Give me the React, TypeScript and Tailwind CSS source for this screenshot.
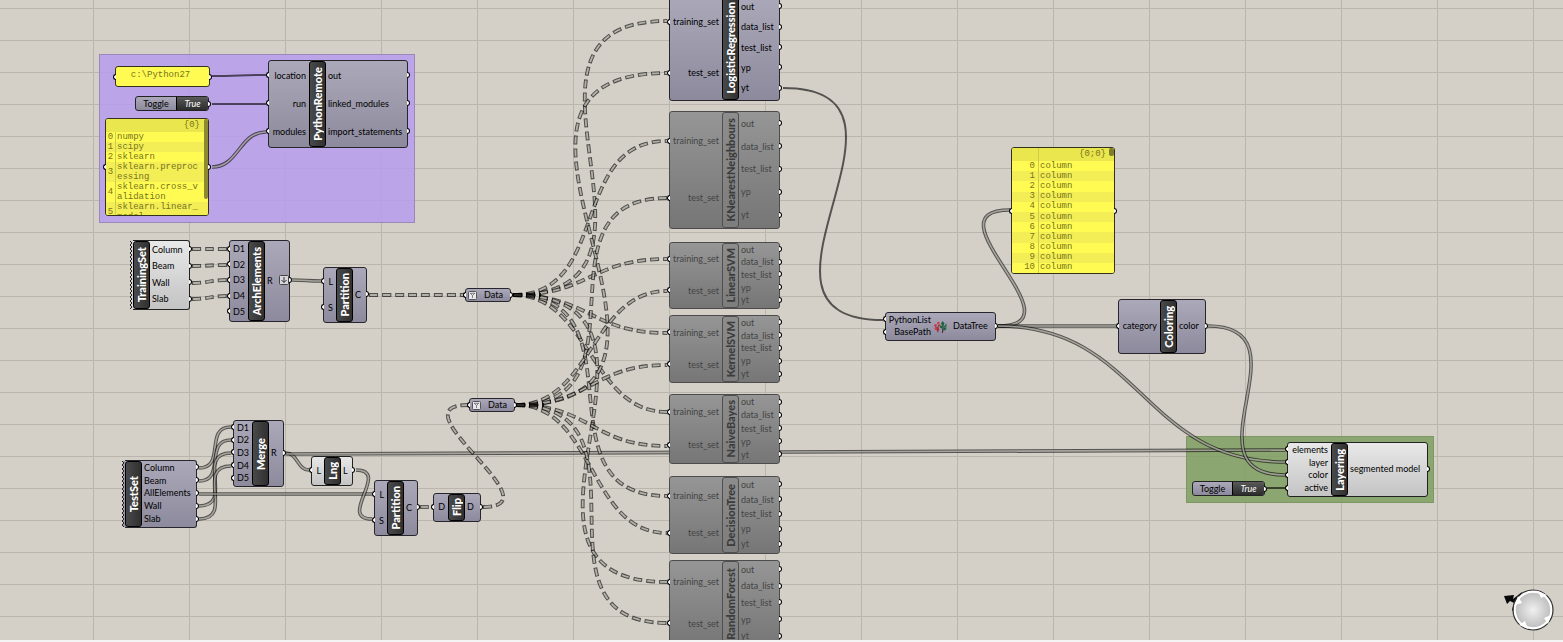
import React from "react";

type WireKind = "item" | "list" | "tree";
type Wire = { from: [number, number]; to: [number, number]; kind: WireKind };

const wire = (kind: WireKind, x1: number, y1: number, x2: number, y2: number): Wire => ({
  kind,
  from: [x1, y1],
  to: [x2, y2],
});

const wires: Wire[] = [
  wire("item", 212, 76, 266, 75),
  wire("item", 212, 104, 266, 104),
  wire("list", 212, 167, 266, 132),
  wire("tree", 192, 249, 227, 249),
  wire("tree", 192, 266, 227, 265),
  wire("tree", 192, 283, 227, 280),
  wire("tree", 192, 299, 227, 296),
  wire("list", 292, 280, 321, 281),
  wire("tree", 369, 295, 464, 295),
  wire("list", 199, 468, 231, 427),
  wire("list", 199, 481, 231, 440),
  wire("list", 199, 506, 231, 453),
  wire("list", 199, 519, 231, 466),
  wire("list", 199, 494, 372, 494),
  wire("list", 286, 453, 309, 470),
  wire("list", 286, 454, 1285, 450),
  wire("list", 356, 470, 372, 519),
  wire("tree", 420, 507, 431, 507),
  wire("tree", 483, 507, 468, 405),
  ...[21, 141, 259, 333, 412, 496, 582].map((y) => wire("tree", 513, 295, 667, y)),
  ...[73, 198, 291, 365, 446, 533, 623].map((y) => wire("tree", 516, 405, 667, y)),
  wire("item", 783, 88, 883, 320),
  wire("list", 998, 326, 1010, 210),
  wire("list", 998, 326, 1116, 326),
  wire("list", 998, 326, 1285, 462),
  wire("list", 1208, 326, 1285, 475),
  wire("item", 1267, 488, 1285, 488),
];

function wirePath({ from: [x1, y1], to: [x2, y2] }: Wire) {
  const dx = Math.abs(x2 - x1);
  const dy = Math.abs(y2 - y1);
  const reach = dx / 2 + Math.max(0, 0.76 * dy - 0.62 * dx);
  return `M${x1} ${y1}C${x1 + reach} ${y1} ${x2 - reach} ${y2} ${x2} ${y2}`;
}

function Wires() {
  return (
    <svg className="pointer-events-none absolute inset-0 size-full" fill="none" aria-hidden="true">
      {wires.map((w, i) => {
        const d = wirePath(w);
        if (w.kind === "item") return <path key={i} d={d} stroke="#000" strokeOpacity=".6" strokeWidth="2" />;
        if (w.kind === "list")
          return (
            <g key={i}>
              <path d={d} stroke="#000" strokeOpacity=".6" strokeWidth="3.6" />
              <path d={d} stroke="#d4d0c8" strokeOpacity=".65" strokeWidth="1.6" />
            </g>
          );
        return (
          <g key={i}>
            <path d={d} stroke="#000" strokeOpacity=".62" strokeWidth="3.8" strokeDasharray="9 4" />
            <path d={d} stroke="#d4d0c8" strokeOpacity=".75" strokeWidth="1.8" strokeDasharray="7 6" strokeDashoffset="-1" />
          </g>
        );
      })}
      <path d="M513 295H541M516 405H544" stroke="#000" strokeOpacity=".75" strokeWidth="4" strokeDasharray="9 4" />
    </svg>
  );
}

function Grip({ side }: { side: "left" | "right" }) {
  return side === "left" ? (
    <span className="absolute top-1/2 right-full h-1.5 w-[3px] -translate-y-1/2 rounded-l-full border border-r-0 border-black bg-white" />
  ) : (
    <span className="absolute top-1/2 left-full h-1.5 w-[3px] -translate-y-1/2 rounded-r-full border border-l-0 border-black bg-white" />
  );
}

type Tone = "normal" | "light" | "off";

const bodyTone: Record<Tone, string> = {
  normal: "border-[#26262c] bg-linear-to-b from-[#aba9b9] to-[#8c8a9c] text-black",
  light: "border-[#222] bg-linear-to-b from-[#e8e8e8] to-[#c4c4c4] text-black",
  off: "border-[#4c4c4c] bg-linear-to-b from-[#969696] to-[#767676] text-[#444]",
};

const labelTone: Record<Tone, string> = {
  normal: "border-black bg-linear-to-r from-[#4a4a4a] to-[#303030] text-white",
  light: "border-black bg-linear-to-r from-[#4a4a4a] to-[#303030] text-white",
  off: "border-[#4f4f4f] bg-[#8585857f] text-[#3c3c3c]",
};

type NodeProps = {
  place: string;
  name: string;
  tone?: Tone;
  inputs?: string[];
  outputs: string[];
  inputWidth?: string;
  graft?: boolean;
  jagged?: boolean;
};

function Ports({ names, side, width, graft }: { names: string[]; side: "left" | "right"; width: string; graft?: boolean }) {
  return (
    <ul className={`flex flex-col pb-0.5 ${width}`}>
      {names.map((n) => (
        <li
          key={n}
          className={`relative flex min-h-0 flex-1 items-center whitespace-nowrap ${
            side === "left" ? "justify-end pr-[3px]" : "justify-start gap-1 pl-0.5"
          }`}
        >
          <Grip side={side} />
          {n}
          {graft && (
            <svg className="ml-0.5 size-[10px]" viewBox="0 0 10 10" fill="none" aria-hidden="true">
              <rect x=".5" y=".5" width="9" height="9" rx="1" fill="#d8d8dc" stroke="#444" />
              <path d="M5 2v5.500M2.500 5 5 7.500 7.500 5" stroke="#333" />
            </svg>
          )}
        </li>
      ))}
    </ul>
  );
}

function Component({ place, name, tone = "normal", inputs, outputs, inputWidth = "w-3", graft, jagged }: NodeProps) {
  return (
    <section
      aria-label={name}
      className={`absolute flex rounded-[3px] border text-[9px] leading-none ${bodyTone[tone]} ${place} ${
        jagged ? "rounded-l-none border-l-0" : ""
      }`}
    >
      {jagged && (
        <svg className="absolute top-0 right-full h-full w-1" aria-hidden="true">
          <defs>
            <pattern id={`edge-${name}`} width="4" height="4" patternUnits="userSpaceOnUse">
              <path d="M4 0H1L3 2 1 4H4Z" fill={tone === "light" ? "#d6d6d6" : "#9a98a9"} />
              <path d="M1 0 3 2 1 4" fill="none" stroke="#222" strokeWidth="1" />
            </pattern>
          </defs>
          <rect width="4" height="100%" fill={`url(#edge-${name})`} />
        </svg>
      )}
      {inputs && <Ports names={inputs} side="left" width={inputWidth} />}
      <h2 className={`flex w-[17px] shrink-0 items-center justify-center rounded-[3px] border ${labelTone[tone]}`}>
        <span className="rotate-180 text-[11px] leading-none font-black whitespace-nowrap [writing-mode:vertical-rl]">{name}</span>
      </h2>
      <Ports names={outputs} side="right" width="flex-1" graft={graft} />
    </section>
  );
}

const fit = ["training_set", "test_set"];
const results = ["out", "data_list", "test_list", "yp", "yt"];
const classifiers: { name: string; place: string; tone: Tone }[] = [
  { name: "LogisticRegression", place: "-top-[5px] left-[669px] h-[106px] w-[111px]", tone: "normal" },
  { name: "KNearestNeighbours", place: "top-[111px] left-[669px] h-[118px] w-[111px]", tone: "off" },
  { name: "LinearSVM", place: "top-[242px] left-[669px] h-[67px] w-[111px]", tone: "off" },
  { name: "KernelSVM", place: "top-[315px] left-[669px] h-[68px] w-[111px]", tone: "off" },
  { name: "NaiveBayes", place: "top-[394px] left-[669px] h-[70px] w-[111px]", tone: "off" },
  { name: "DecisionTree", place: "top-[476px] left-[669px] h-[78px] w-[111px]", tone: "off" },
  { name: "RandomForest", place: "top-[560px] left-[669px] h-[87px] w-[111px]", tone: "off" },
];

function Toggle({ place }: { place: string }) {
  return (
    <button
      type="button"
      aria-pressed="true"
      className={`absolute flex rounded-[3px] border border-[#222] bg-linear-to-b from-[#aba9b9] to-[#8c8a9c] text-[9px] leading-none text-black ${place}`}
    >
      <span className="flex flex-1 items-center justify-center self-stretch">Toggle</span>
      <span className="flex w-8 items-center justify-center self-stretch rounded-r-[2px] border-l border-black bg-linear-to-b from-[#5a5a5a] to-[#2c2c2c] text-white italic">
        True
      </span>
      <Grip side="right" />
    </button>
  );
}

function DataParam({ place }: { place: string }) {
  return (
    <div
      className={`absolute flex items-center rounded-[3px] border border-[#26262c] bg-linear-to-b from-[#aba9b9] to-[#8c8a9c] pl-0.5 text-[9px] leading-none text-black ${place}`}
    >
      <Grip side="left" />
      <svg className="size-[9px]" viewBox="0 0 9 9" fill="none" aria-hidden="true">
        <rect x=".5" y=".5" width="8" height="8" rx="1" fill="#e8e8ec" stroke="#555" />
        <path d="M2 2.300h5M4.500 7V4.500L2.300 2.300M4.500 4.500l2.200-2.200" stroke="#666" strokeWidth=".8" />
      </svg>
      <span className="flex-1 pb-px text-center">Data</span>
      <Grip side="right" />
    </div>
  );
}

const panelFrame =
  "absolute rounded-[3px] border border-[#33331c] bg-[#fffb52] font-['Liberation_Mono','Courier_New',monospace] text-[9px] text-[#77751c]";

const modules = [
  ["numpy"],
  ["scipy"],
  ["sklearn"],
  ["sklearn.preproc", "essing"],
  ["sklearn.cross_v", "alidation"],
  ["sklearn.linear_", "model"],
];

function ModulesPanel() {
  return (
    <div className={`${panelFrame} top-[118px] left-[105px] h-[98px] w-[104px]`}>
      <Grip side="left" />
      <div className="flex h-full flex-col overflow-hidden rounded-[2px]">
        <div className="flex h-[13px] shrink-0 items-center justify-end bg-[#eae64e] pr-2 leading-none">{"{0}"}</div>
        <ol className="leading-[10px]">
          {modules.map((lines, i) => (
            <li key={i} className="flex odd:bg-[#fffb52] even:bg-[#f3ee55]">
              <span className="flex w-2.5 items-center justify-center border-r border-[#d0cb48]">{i}</span>
              <span className="pl-px">
                {lines.map((l) => (
                  <span key={l} className="block">
                    {l}
                  </span>
                ))}
              </span>
            </li>
          ))}
        </ol>
      </div>
      <span className="absolute top-0 right-0 h-20 w-1 rounded-[2px] bg-[#8c892f]" />
      <Grip side="right" />
    </div>
  );
}

function ColumnsPanel() {
  return (
    <div className={`${panelFrame} top-[147px] left-[1011px] h-[127px] w-[104px]`}>
      <Grip side="left" />
      <div className="flex h-full flex-col overflow-hidden rounded-[2px]">
        <div className="flex h-[13px] shrink-0 bg-[#eae64e] leading-none">
          <span className="w-[27px] border-r border-[#d0cb48]" />
          <span className="flex flex-1 items-center justify-end pr-2">{"{0;0}"}</span>
        </div>
        <ol className="flex flex-1 flex-col leading-none">
          {Array.from({ length: 11 }, (_, i) => (
            <li key={i} className="flex min-h-0 flex-1 odd:bg-[#fffb52] even:bg-[#f3ee55]">
              <span className="flex w-[27px] items-center justify-end border-r border-[#d0cb48] pr-[3px]">{i}</span>
              <span className="flex items-center pl-px">column</span>
            </li>
          ))}
        </ol>
      </div>
      <span className="absolute top-0 right-0 h-2 w-[5px] rounded-[2px] bg-[#7f7c2c]" />
      <Grip side="right" />
    </div>
  );
}

function DataTree() {
  return (
    <section
      aria-label="DataTree"
      className="absolute top-[312px] left-[885px] flex h-[29px] w-[111px] items-stretch rounded-[3px] border border-[#26262c] bg-linear-to-b from-[#aba9b9] to-[#8c8a9c] text-[9px] leading-none text-black"
    >
      <Ports names={["PythonList", "BasePath"]} side="left" width="w-12" />
      <svg className="mr-1 w-[13px] self-center" height="12" viewBox="0 0 15 14" fill="none" aria-hidden="true">
        <path d="M4.500 13V7M1 6l3 3 2-5M2 9l2 2 2-2" stroke="#a92c3c" strokeWidth="1.500" />
        <circle cx="1.800" cy="5" r="1.500" fill="#cf3d50" />
        <circle cx="5" cy="2.500" r="1.500" fill="#cf3d50" />
        <circle cx="2" cy="9" r="1.400" fill="#cf3d50" />
        <path d="M9.500 14c1-2 .8-5 .8-9" stroke="#333" strokeWidth="1.300" />
        <path d="m10 0 2.300 3-2.300 4-2-4ZM14.500 2.500v4l-4 1.500ZM6 4.500l3.500 1.500.5 3L7 8ZM15 7.500l-2 3.500-3-.5 1.500-3Z" fill="#23643f" />
      </svg>
      <Ports names={["DataTree"]} side="right" width="flex-1" />
    </section>
  );
}

function Compass() {
  return (
    <svg className="absolute right-2 bottom-2 h-11 w-[52px]" viewBox="0 0 52 44" aria-label="Compass" role="img">
      <path d="M1 8 11 7 10 11 19 4 13 26 9 22 11 15 7 13 4 16Z" fill="#080808" />
      <radialGradient id="dial">
        <stop offset="0" stopColor="#f0f0f0" />
        <stop offset=".85" stopColor="#c4c4c4" />
      </radialGradient>
      <circle cx="30" cy="22" r="18.500" fill="url(#dial)" stroke="#fff" strokeWidth="2.500" />
      <circle cx="30" cy="22" r="20" fill="none" stroke="#333" strokeWidth="1.200" />
      <path d="m35 3 9 4-6 3ZM48 27l-3 9-4-6ZM25 41l-9-4 6-4ZM12 17l3-9 4 7Z" fill="#fff" />
    </svg>
  );
}

export default function App() {
  return (
    <main className="flex h-screen flex-col bg-[#f4f4f4] font-[Lato,'Open_Sans',sans-serif]">
      <div className="relative mb-0.5 flex-1 overflow-hidden bg-[#d4d0c8] bg-[linear-gradient(to_right,#bab6ae_1px,transparent_1px),linear-gradient(to_bottom,#bab6ae_1px,transparent_1px)] bg-[size:96px_32px] bg-[position:93px_8px]">
        <div className="absolute top-[54px] left-[99px] h-[169px] w-[316px] border border-[#9988b8] bg-[rgba(182,156,236,0.85)]" />
        <div className="absolute top-[436px] left-[1186px] h-[67px] w-[248px] border border-[#7d9863] bg-[rgba(126,159,98,0.85)]" />
        <Wires />

        <div className={`${panelFrame} top-[66px] left-[115px] flex h-[21px] w-[95px] items-center justify-center pr-1 pb-0.5`}>
          <Grip side="left" />
          {"c:\\Python27"}
          <Grip side="right" />
        </div>
        <Toggle place="top-[96px] left-[135px] h-[15px] w-[74px]" />
        <ModulesPanel />
        <Component
          place="top-[60px] left-[268px] h-[88px] w-[140px]"
          name="PythonRemote"
          inputs={["location", "run", "modules"]}
          outputs={["out", "linked_modules", "import_statements"]}
          inputWidth="w-10"
        />

        <Component place="top-[240px] left-[133px] h-[70px] w-[57px]" name="TrainingSet" tone="light" outputs={["Column", "Beam", "Wall", "Slab"]} jagged />
        <Component
          place="top-[240px] left-[229px] h-[82px] w-[61px]"
          name="ArchElements"
          inputs={["D1", "D2", "D3", "D4", "D5"]}
          outputs={["R"]}
          inputWidth="w-[18px]"
          graft
        />
        <Component place="top-[267px] left-[323px] h-[56px] w-[44px]" name="Partition" inputs={["L", "S"]} outputs={["C"]} />
        <DataParam place="top-[288px] left-[465px] h-[14px] w-[46px]" />
        <DataParam place="top-[398px] left-[469px] h-[14px] w-[46px]" />

        <Component
          place="top-[460px] left-[125px] h-[68px] w-[72px]"
          name="TestSet"
          outputs={["Column", "Beam", "AllElements", "Wall", "Slab"]}
          jagged
        />
        <Component
          place="top-[420px] left-[233px] h-[67px] w-[51px]"
          name="Merge"
          inputs={["D1", "D2", "D3", "D4", "D5"]}
          outputs={["R"]}
          inputWidth="w-[18px]"
        />
        <Component place="top-[456px] left-[311px] h-[30px] w-[42px]" name="Lng" tone="light" inputs={["L"]} outputs={["L"]} />
        <Component place="top-[480px] left-[374px] h-[56px] w-[44px]" name="Partition" inputs={["L", "S"]} outputs={["C"]} />
        <Component place="top-[493px] left-[433px] h-[29px] w-[48px]" name="Flip" inputs={["D"]} outputs={["D"]} inputWidth="w-3.5" />

        {classifiers.map((c) => (
          <Component key={c.name} {...c} inputs={fit} outputs={results} inputWidth="w-[52px]" />
        ))}

        <DataTree />
        <ColumnsPanel />
        <Component place="top-[299px] left-[1118px] h-[55px] w-[88px]" name="Coloring" inputs={["category"]} outputs={["color"]} inputWidth="w-[41px]" />
        <Toggle place="top-[481px] left-[1192px] h-[15px] w-[73px]" />
        <Component
          place="top-[442px] left-[1287px] h-[55px] w-[141px]"
          name="Layering"
          tone="light"
          inputs={["elements", "layer", "color", "active"]}
          outputs={["segmented model"]}
          inputWidth="w-[43px]"
        />
        <Compass />
      </div>
    </main>
  );
}
